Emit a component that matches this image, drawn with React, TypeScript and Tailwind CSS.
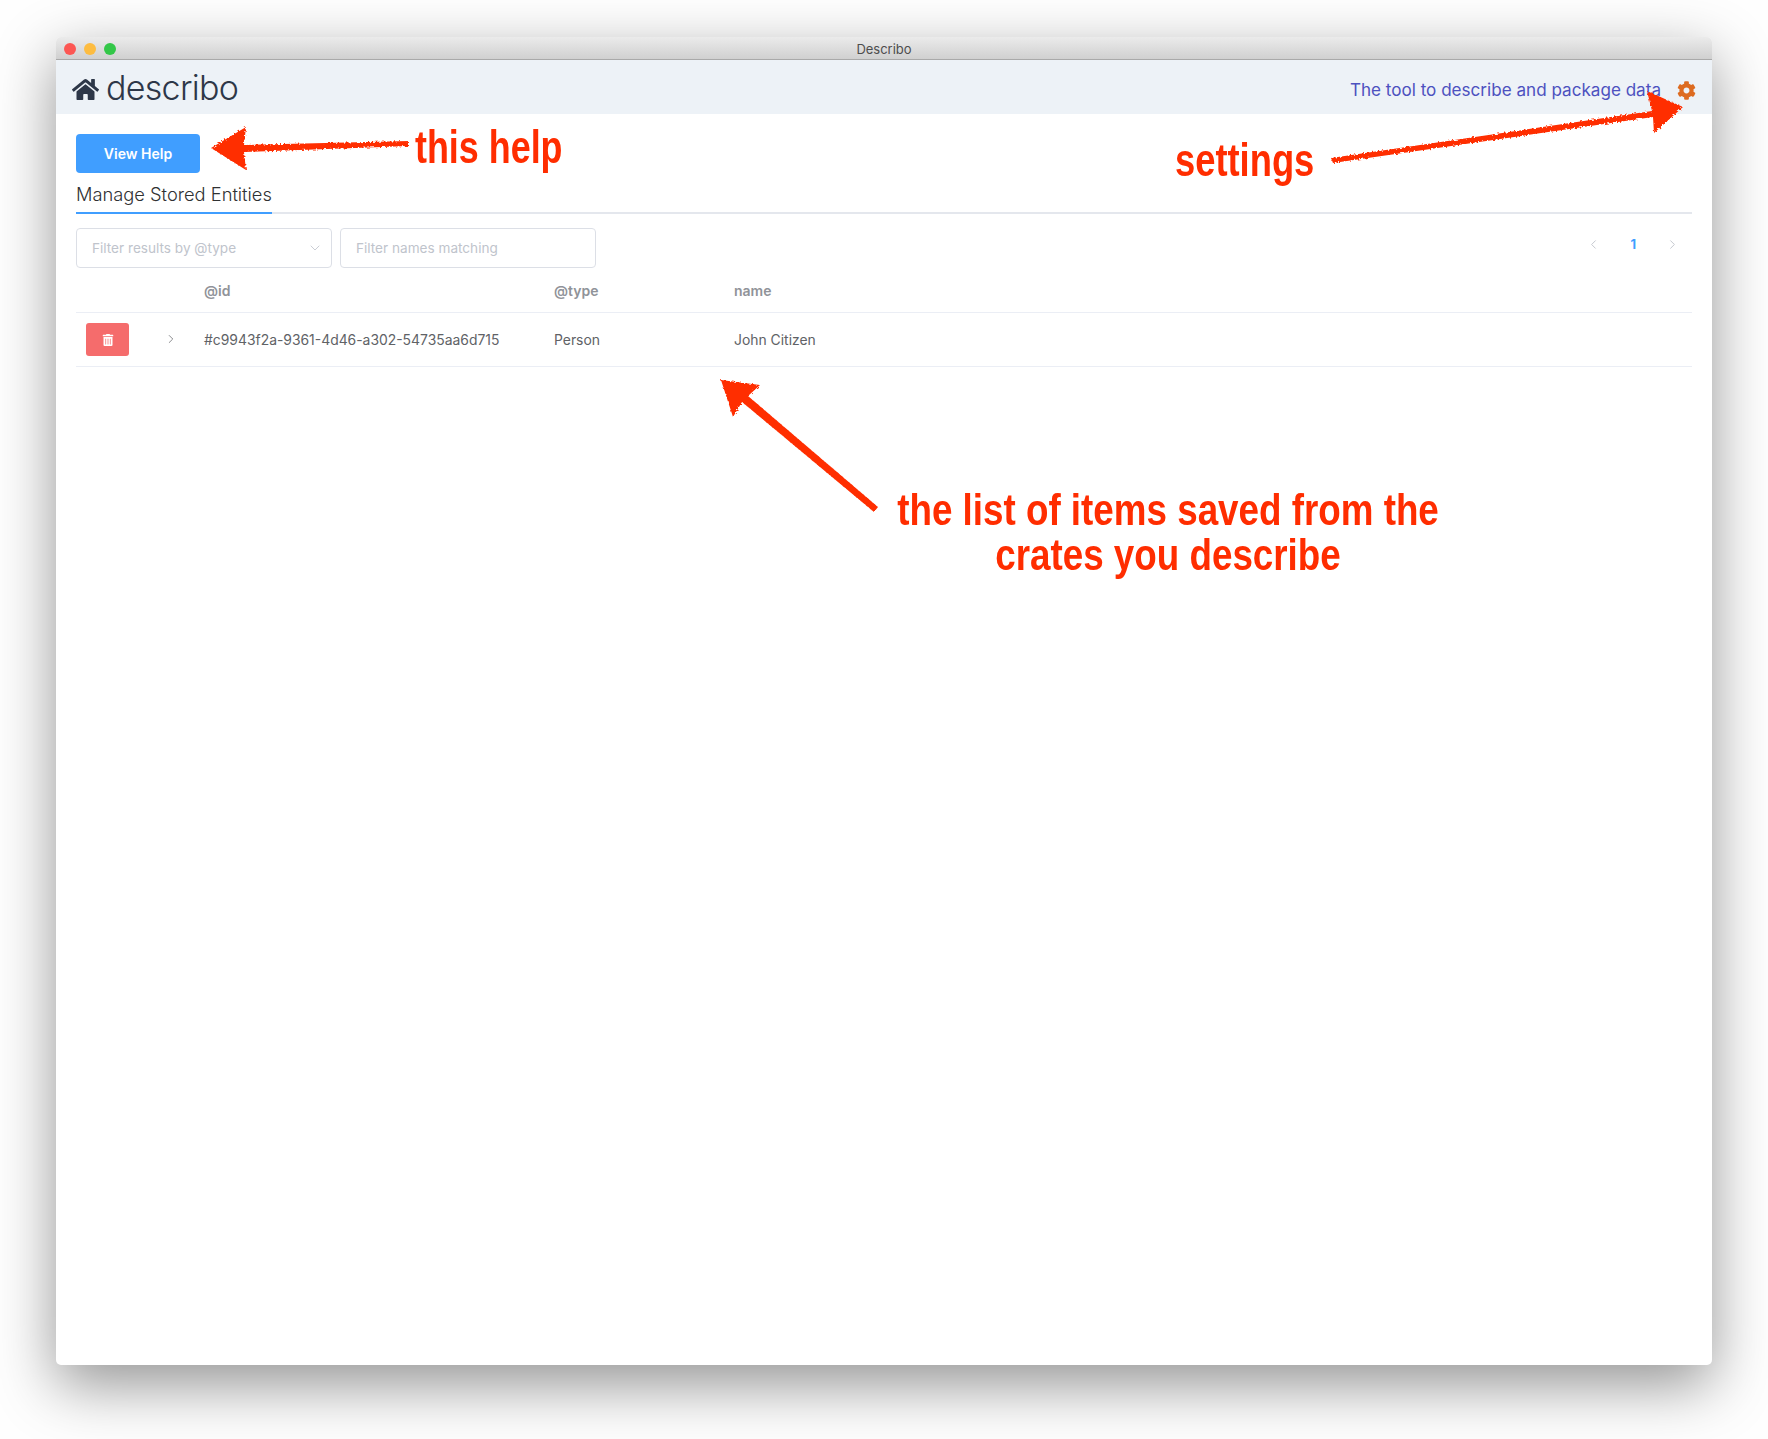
import { ChevronDown, ChevronLeft, ChevronRight } from "lucide-react";
import { FaCog, FaHome, FaTrashAlt } from "react-icons/fa";

function Annotations() {
  return (
    <>
      <svg className="absolute left-0 top-0 pointer-events-none" width="1768" height="1439" fill="#ff2d00">
        <defs>
          <filter id="chalk" x="-5%" y="-5%" width="110%" height="110%">
            <feTurbulence type="fractalNoise" baseFrequency="0.5" numOctaves="2" seed="4" />
            <feDisplacementMap in="SourceGraphic" scale="4" />
          </filter>
        </defs>
        <g filter="url(#chalk)">
          {/* this help */}
          <polygon points="211,148 246,127 244,145 409,141 409,146 244,152 246,170" />
          {/* settings */}
          <polygon points="1331,158 1652,111 1647,91 1683,107 1654,133 1653,117 1333,163" />
          {/* list */}
          <polygon points="721,380 760,385 748,396 878,507 874,512 742,402 733,417" />
        </g>
      </svg>
      <div className="absolute left-[415px] top-[119px] origin-left scale-x-[0.78] font-['Liberation_Sans',sans-serif] text-[46px] leading-[56px] font-bold text-[#ff2d00] whitespace-nowrap">
        this help
      </div>
      <div className="absolute left-[1175px] top-[132px] origin-left scale-x-[0.79] font-['Liberation_Sans',sans-serif] text-[46px] leading-[56px] font-bold text-[#ff2d00] whitespace-nowrap">
        settings
      </div>
      <div className="absolute left-[768px] top-[487px] w-[800px] origin-center scale-x-[0.836] text-center font-['Liberation_Sans',sans-serif] text-[44px] leading-[45px] font-bold text-[#ff2d00] whitespace-nowrap">
        <div>the list of items saved from the</div>
        <div>crates you describe</div>
      </div>
    </>
  );
}

export default function App() {
  return (
    <div className="relative h-[1439px] w-[1768px] overflow-hidden bg-[#fefefe] px-[56px] pt-[37px] font-['Inter',sans-serif]">
      <div className="flex h-[1328px] flex-col overflow-hidden rounded-[5px] bg-white shadow-[0_20px_60px_0_rgba(0,0,0,0.42)]">
        {/* title bar */}
        <div className="relative flex h-[23px] shrink-0 items-center justify-center border-b border-[#a9a9a9] bg-gradient-to-b from-[#ebebeb] to-[#d0d0d0] pt-[3px]">
          <div className="absolute left-[8px] top-[6px] flex gap-[8px]">
            <span className="h-[12px] w-[12px] rounded-full bg-[#fc5753]" />
            <span className="h-[12px] w-[12px] rounded-full bg-[#fdbc40]" />
            <span className="h-[12px] w-[12px] rounded-full bg-[#33c748]" />
          </div>
          <span className="text-[13px] text-[#4d4d4d]">Describo</span>
        </div>

        {/* header */}
        <div className="flex h-[54px] shrink-0 items-center justify-between bg-[#edf2f7] px-[16px]">
          <div className="flex items-center gap-[7px] text-[#2d3748]">
            <FaHome className="mt-[5px] text-[27px]" />
            <span className="mt-[1px] text-[34px] font-light leading-none tracking-[-0.7px]">describo</span>
          </div>
          <div className="mt-[6px] flex items-center gap-[16px]">
            <span className="text-[17.1px] text-[#4c51bf]">The tool to describe and package data</span>
            <FaCog className="mt-[1px] text-[19px] text-[#dd6b20]" />
          </div>
        </div>

        {/* content */}
        <div className="flex flex-col px-[20px] pt-[20px]">
          <button className="h-[39px] w-[124px] rounded-[4px] bg-[#409eff] text-[14px] font-semibold text-white">
            View Help
          </button>

          <div className="mt-[8px] border-b-2 border-[#e4e7ed]">
            <div className="-mb-[2px] w-fit border-b-2 border-[#409eff] pb-[5px] text-[18.3px] font-light leading-[26px] text-[#303133]">
              Manage Stored Entities
            </div>
          </div>

          <div className="mt-[14px] flex items-start justify-between">
            <div className="flex gap-[8px]">
              <div className="flex h-[40px] w-[256px] items-center justify-between rounded-[4px] border border-[#dcdfe6] pl-[15px] pr-[8px] text-[13.6px] text-[#c0c4cc]">
                <span>Filter results by @type</span>
                <ChevronDown size={16} strokeWidth={1.25} />
              </div>
              <div className="flex h-[40px] w-[256px] items-center rounded-[4px] border border-[#dcdfe6] px-[15px] text-[13.6px] text-[#c0c4cc]">
                Filter names matching
              </div>
            </div>
            <div className="mr-[12px] mt-[7px] flex items-center gap-[29px] text-[#c0c4cc]">
              <ChevronLeft size={15} strokeWidth={1.5} />
              <span className="text-[13px] font-bold text-[#409eff]">1</span>
              <ChevronRight size={15} strokeWidth={1.5} />
            </div>
          </div>

          {/* table */}
          <div className="flex h-[45px] items-center border-b border-[#ebeef5] text-[14px] font-semibold text-[#909399]">
            <div className="w-[128px]" />
            <div className="w-[350px]">@id</div>
            <div className="w-[180px]">@type</div>
            <div>name</div>
          </div>
          <div className="flex h-[54px] items-center border-b border-[#ebeef5] text-[13.9px] text-[#606266]">
            <div className="w-[128px] pl-[10px]">
              <div className="flex h-[33px] w-[43px] items-center justify-center rounded-[3px] bg-[#f56c6c]">
                <FaTrashAlt className="text-[12px] text-white" />
              </div>
            </div>
            <div className="relative w-[350px] pt-[1px]">
              #c9943f2a-9361-4d46-a302-54735aa6d715
              <ChevronRight size={14} strokeWidth={1.25} className="absolute -left-[40px] top-[3px] text-[#606266]" />
            </div>
            <div className="w-[180px] pt-[1px]">Person</div>
            <div className="pt-[1px]">John Citizen</div>
          </div>
        </div>
      </div>
      <Annotations />
    </div>
  );
}
